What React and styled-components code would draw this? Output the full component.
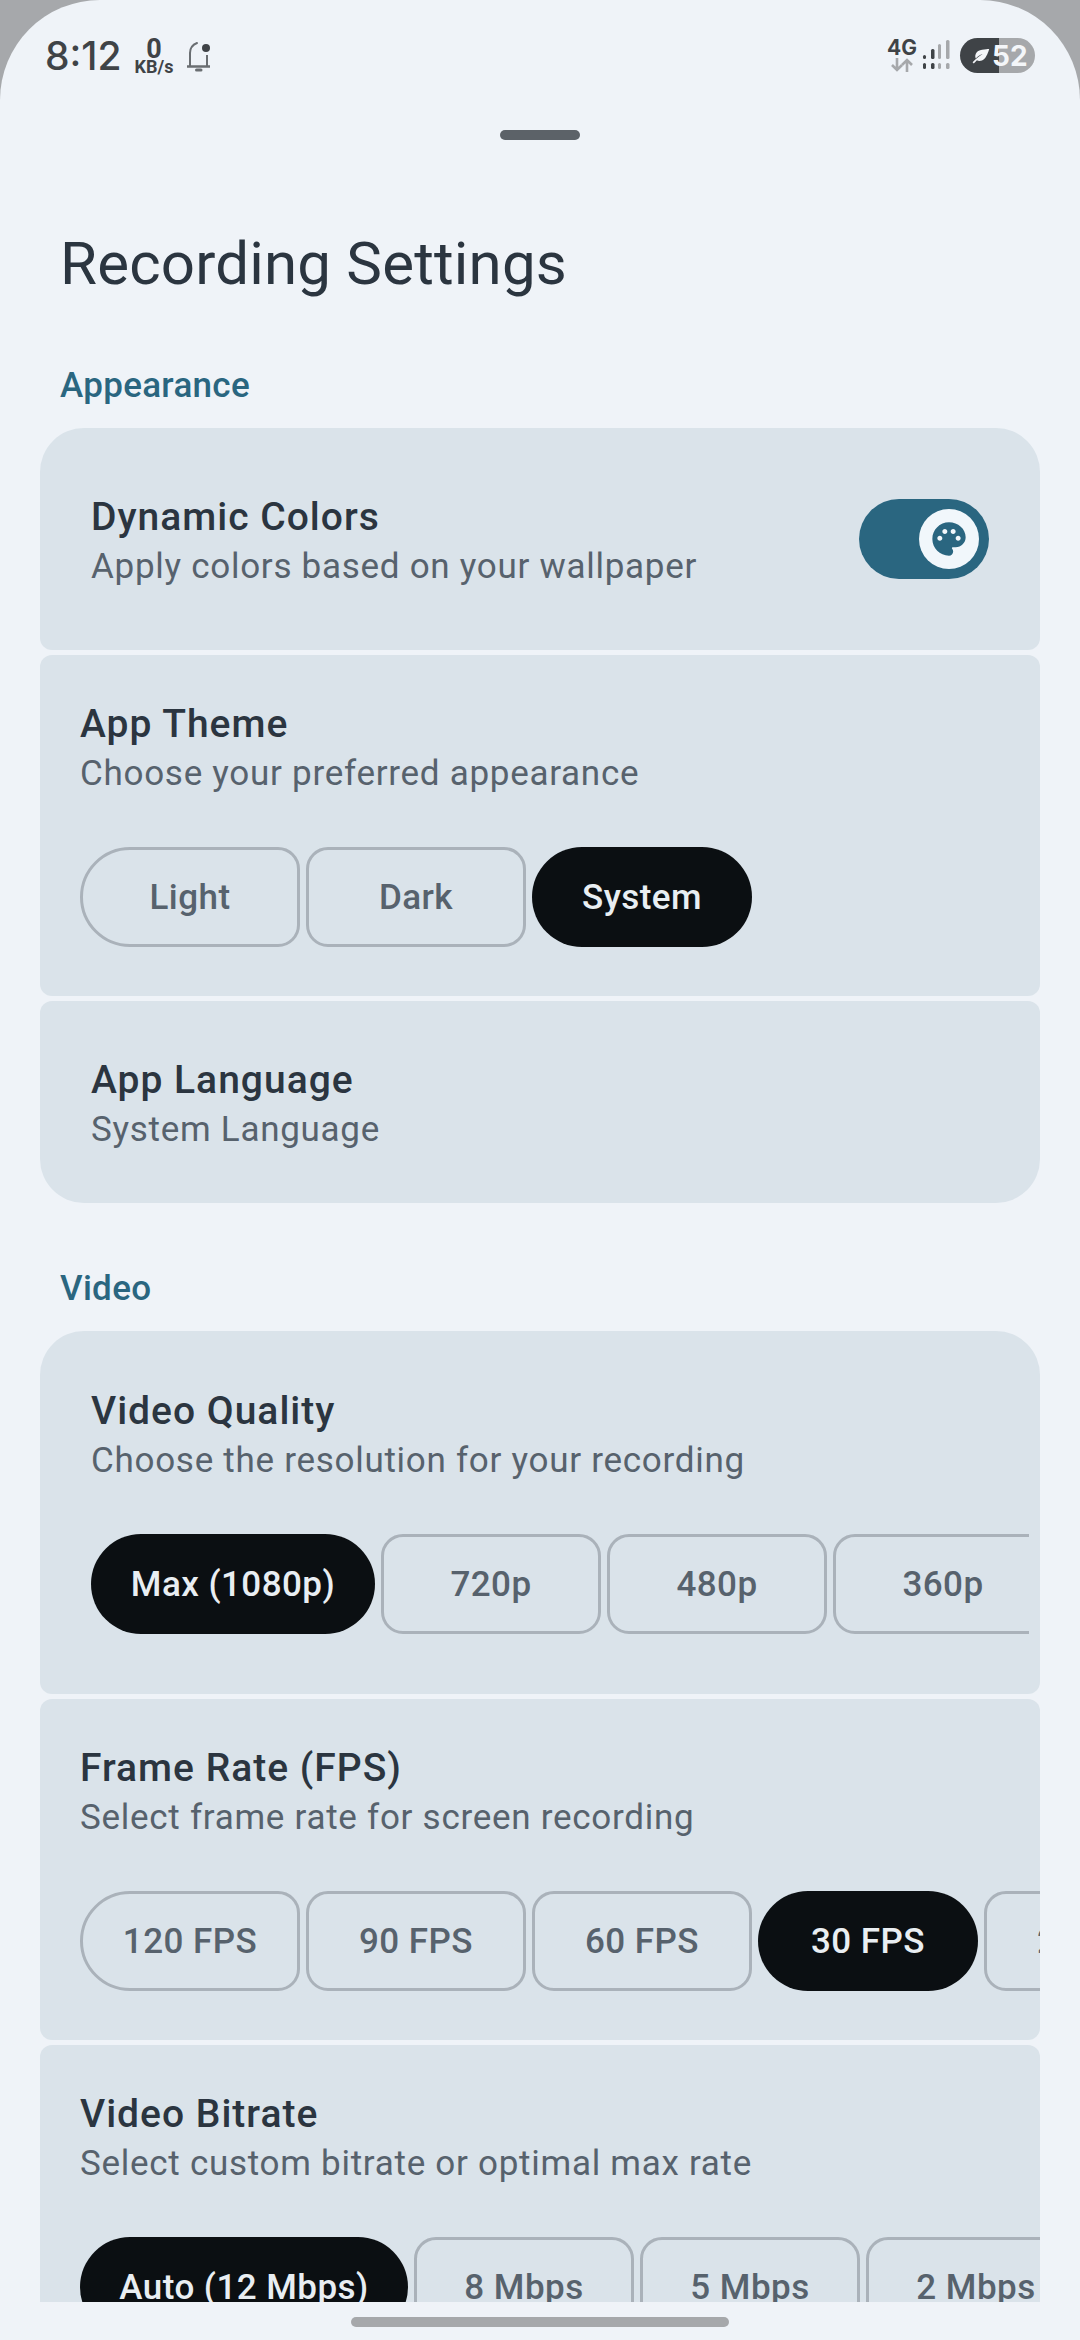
import styled, { createGlobalStyle } from 'styled-components'
import { MdPalette } from 'react-icons/md'

const GlobalStyle = createGlobalStyle`
  html, body {
    margin: 0;
    padding: 0;
    background: #a6a8ab;
    font-family: Roboto, "Noto Sans", sans-serif;
  }
`

const Sheet = styled.div`
  width: 1080px;
  height: 2340px;
  display: flex;
  flex-direction: column;
  overflow: hidden;
  background: #eff3f8;
  border-radius: 100px 100px 0 0;
`

const StatusBar = styled.div`
  height: 112px;
  flex-shrink: 0;
  box-sizing: border-box;
  padding: 0 45px;
  display: flex;
  align-items: flex-start;
  justify-content: space-between;
  color: #3f4347;
`

const StatusLeft = styled.div`
  display: flex;
  align-items: flex-start;
  padding-top: 33px;
`

const Clock = styled.span`
  font-family: Inter, Roboto, sans-serif;
  font-size: 39px;
  font-weight: 500;
  line-height: 45px;
  width: 85px;
`

const Speed = styled.div`
  width: 48px;
  display: flex;
  flex-direction: column;
  align-items: center;
  font-family: Roboto, sans-serif;
  font-weight: 700;
`

const SpeedValue = styled.span`
  font-size: 27px;
  line-height: 20px;
  margin-top: 6px;
`

const SpeedUnit = styled.span`
  font-size: 18px;
  line-height: 16px;
`

const BellIcon = styled.svg`
  width: 30px;
  height: 36px;
  margin: 5px 0 0 8px;
`

const StatusRight = styled.div`
  display: flex;
  align-items: flex-start;
  padding-top: 38px;
`

const NetworkType = styled.div`
  width: 36px;
  display: flex;
  flex-direction: column;
  align-items: center;
  font-family: Inter, Roboto, sans-serif;
  font-size: 21px;
  font-weight: 700;
  line-height: 20px;
`

const SignalIcon = styled.svg`
  width: 32px;
  height: 34px;
`

const Battery = styled.div`
  width: 75px;
  height: 35px;
  margin-left: 8px;
  border-radius: 18px;
  background: linear-gradient(to right, #3f4347 52%, #a6a8ab 52%);
  color: #f4f6f9;
  display: flex;
  align-items: center;
  gap: 2px;
  padding-left: 11px;
  box-sizing: border-box;
  font-family: Inter, Roboto, sans-serif;
  font-size: 28px;
  font-weight: 700;
`

const LeafIcon = styled.svg`
  width: 19px;
  height: 16px;
  flex-shrink: 0;
`

const Handle = styled.div`
  width: 80px;
  height: 10px;
  flex-shrink: 0;
  margin: 18px auto 0;
  border-radius: 5px;
  background: #5c6268;
`

const Scroll = styled.div`
  flex: 1;
  min-height: 0;
  overflow: hidden;
  padding: 0 40px;
`

const PageTitle = styled.h1`
  margin: 89px 0 0 20px;
  font-size: 60px;
  font-weight: 400;
  line-height: 70px;
  letter-spacing: 0.2px;
  color: #2b3540;
`

const SectionLabel = styled.h2`
  margin: ${(props) => props.$top}px 0 22px 20px;
  font-size: 35px;
  font-weight: 500;
  line-height: 40px;
  letter-spacing: 0.3px;
  color: #2a6680;
`

const Group = styled.div`
  display: flex;
  flex-direction: column;
  gap: 5px;
`

const Card = styled.div`
  background: #dae3ea;
  border-radius: 12px;
  overflow: hidden;
  padding: ${(props) => props.$padding};
  &:first-child {
    border-top-left-radius: 44px;
    border-top-right-radius: 44px;
  }
  &:last-child {
    border-bottom-left-radius: 44px;
    border-bottom-right-radius: 44px;
  }
`

const SwitchCard = styled(Card)`
  display: flex;
  align-items: center;
  justify-content: space-between;
`

const Label = styled.div`
  font-size: 39px;
  font-weight: 500;
  line-height: 50px;
  letter-spacing: 1px;
  color: #2b3540;
`

const Hint = styled.div`
  font-size: 35px;
  line-height: 50px;
  letter-spacing: 0.72px;
  color: #57626d;
`

const Toggle = styled.div`
  width: 130px;
  height: 80px;
  margin: 0 0 6px;
  border-radius: 40px;
  background: #2a6680;
  display: flex;
  align-items: center;
  justify-content: flex-end;
  padding-right: 10px;
  box-sizing: border-box;
`

const Thumb = styled.div`
  width: 60px;
  height: 60px;
  border-radius: 50%;
  background: #f1f7fb;
  color: #2a6680;
  display: flex;
  align-items: center;
  justify-content: center;
`

const Options = styled.div`
  display: flex;
  gap: 6px;
  margin-top: 48px;
  overflow: hidden;
`

const Option = styled.div`
  flex-shrink: 0;
  width: ${(props) => props.$width || 220}px;
  height: 100px;
  box-sizing: border-box;
  display: flex;
  align-items: center;
  justify-content: center;
  font-size: 35px;
  font-weight: 500;
  letter-spacing: 0.45px;
  white-space: nowrap;
  border: ${(props) => (props.$selected ? 'none' : '3px solid #aab2ba')};
  background: ${(props) => (props.$selected ? '#0b0f12' : 'transparent')};
  color: ${(props) => (props.$selected ? '#e9eef2' : '#57626d')};
  border-radius: ${(props) => (props.$selected ? '50px' : '22px')};
  &:first-child {
    border-top-left-radius: 50px;
    border-bottom-left-radius: 50px;
  }
`

const NavArea = styled.div`
  height: 38px;
  flex-shrink: 0;
  display: flex;
  justify-content: center;
  padding-top: 15px;
  box-sizing: border-box;
`

const NavBar = styled.div`
  width: 378px;
  height: 10px;
  border-radius: 5px;
  background: #a6a8ab;
`

function OptionRow({ items }) {
  return (
    <Options>
      {items.map((item) => (
        <Option key={item.text} $selected={item.selected} $width={item.width}>
          {item.text}
        </Option>
      ))}
    </Options>
  )
}

export default function App() {
  return (
    <>
      <GlobalStyle />
      <Sheet>
        <StatusBar>
          <StatusLeft>
            <Clock>8:12</Clock>
            <Speed>
              <SpeedValue>0</SpeedValue>
              <SpeedUnit>KB/s</SpeedUnit>
            </Speed>
            <BellIcon viewBox="0 0 30 36" fill="none" stroke="#6a6e72" strokeWidth="2">
              <path d="M4 28V15c0-4 2-8 7-10" strokeLinecap="round" />
              <path d="M21 17v11" />
              <path d="M1 28.500h23" strokeWidth="2.500" />
              <path d="M10.500 32h4.500" strokeWidth="3" strokeLinecap="round" />
              <circle cx="20" cy="10" r="4" fill="#3f4347" stroke="none" />
            </BellIcon>
          </StatusLeft>
          <StatusRight>
            <NetworkType>
              4G
              <svg width="24" height="14" viewBox="0 0 24 14" fill="none" stroke="#a6a8ab" strokeWidth="2.600">
                <path d="M7 0v12M2 7l5 5 5-5" />
                <path d="M17 14V2M12 7l5-5 5 5" />
              </svg>
            </NetworkType>
            <SignalIcon viewBox="0 0 32 34">
              <rect x="3" y="17" width="3" height="4" rx="1.500" fill="#3f4347" />
              <rect x="11" y="11" width="3.500" height="10" rx="1.500" fill="#3f4347" />
              <rect x="18" y="6" width="3" height="15" rx="1.500" fill="#a6a8ab" />
              <rect x="26" y="2" width="3.500" height="19" rx="1.500" fill="#a6a8ab" />
              <rect x="3" y="25" width="3" height="6" rx="1.500" fill="#3f4347" />
              <rect x="11" y="25" width="3.500" height="6" rx="1.500" fill="#3f4347" />
              <rect x="18" y="25" width="3" height="6" rx="1.500" fill="#a6a8ab" />
              <rect x="26" y="25" width="3.500" height="6" rx="1.500" fill="#a6a8ab" />
            </SignalIcon>
            <Battery>
              <LeafIcon viewBox="0 0 24 20" fill="currentColor">
                <path d="M23 1S11 1 7.500 5C5 8 5 11 6 13c3-3 6-5 9-6-4 3-9 6-13 11l1.500 1.500c1.500-1.500 3-3 4-4 2.500 1.500 6.500 1 9.500-2C21 9 23 1 23 1Z" />
              </LeafIcon>
              52
            </Battery>
          </StatusRight>
        </StatusBar>
        <Handle />
        <Scroll>
          <PageTitle>Recording Settings</PageTitle>

          <SectionLabel $top={67}>Appearance</SectionLabel>
          <Group>
            <SwitchCard $padding="64px 51px 58px 51px">
              <div>
                <Label>Dynamic Colors</Label>
                <Hint>Apply colors based on your wallpaper</Hint>
              </div>
              <Toggle>
                <Thumb>
                  <MdPalette size={40} />
                </Thumb>
              </Toggle>
            </SwitchCard>
            <Card $padding="44px 0 49px 40px">
              <Label>App Theme</Label>
              <Hint>Choose your preferred appearance</Hint>
              <OptionRow
                items={[
                  { text: 'Light' },
                  { text: 'Dark' },
                  { text: 'System', selected: true },
                ]}
              />
            </Card>
            <Card $padding="54px 51px 48px">
              <Label>App Language</Label>
              <Hint>System Language</Hint>
            </Card>
          </Group>

          <SectionLabel $top={66}>Video</SectionLabel>
          <Group>
            <Card $padding="55px 11px 60px 51px">
              <Label>Video Quality</Label>
              <Hint>Choose the resolution for your recording</Hint>
              <OptionRow
                items={[
                  { text: 'Max (1080p)', selected: true, width: 284 },
                  { text: '720p' },
                  { text: '480p' },
                  { text: '360p' },
                ]}
              />
            </Card>
            <Card $padding="44px 0 49px 40px">
              <Label>Frame Rate (FPS)</Label>
              <Hint>Select frame rate for screen recording</Hint>
              <OptionRow
                items={[
                  { text: '120 FPS' },
                  { text: '90 FPS' },
                  { text: '60 FPS' },
                  { text: '30 FPS', selected: true },
                  { text: '24 FPS' },
                ]}
              />
            </Card>
            <Card $padding="44px 0 49px 40px">
              <Label>Video Bitrate</Label>
              <Hint>Select custom bitrate or optimal max rate</Hint>
              <OptionRow
                items={[
                  { text: 'Auto (12 Mbps)', selected: true, width: 328 },
                  { text: '8 Mbps' },
                  { text: '5 Mbps' },
                  { text: '2 Mbps' },
                ]}
              />
            </Card>
          </Group>
        </Scroll>
        <NavArea>
          <NavBar />
        </NavArea>
      </Sheet>
    </>
  )
}
